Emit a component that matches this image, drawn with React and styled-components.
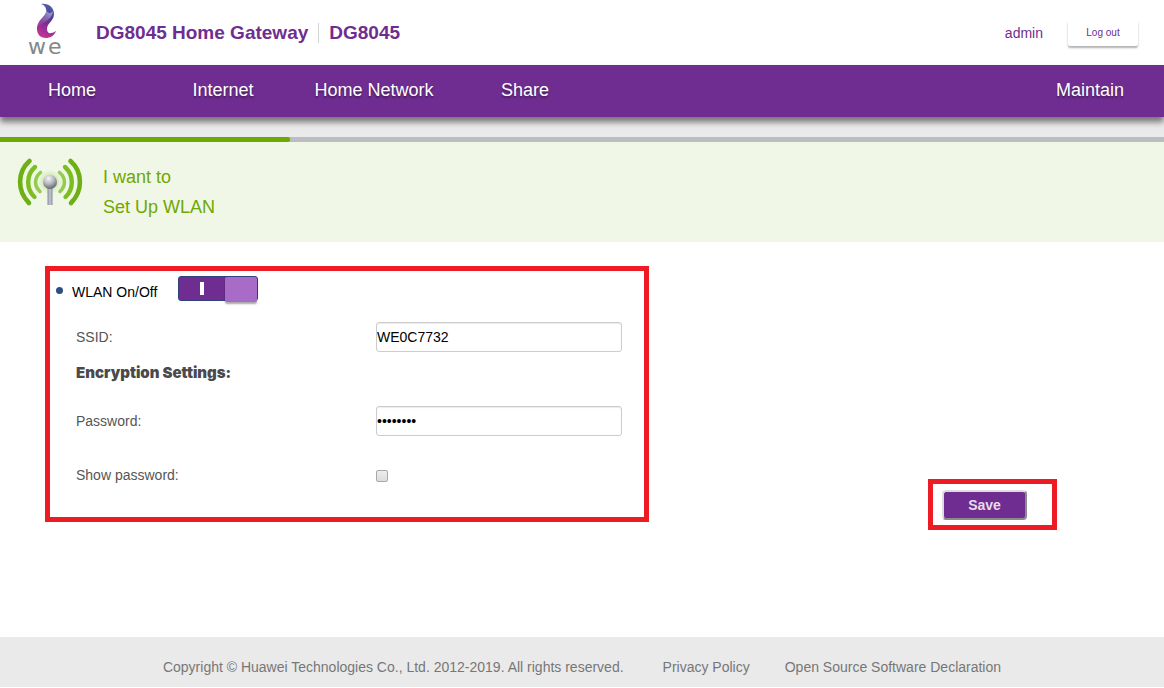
import React, { useState } from "react";
import styled, { createGlobalStyle } from "styled-components";

const GlobalStyle = createGlobalStyle`
  * { box-sizing: border-box; }
  body {
    margin: 0;
    background: #fff;
    font-family: "Liberation Sans", Arial, sans-serif;
    font-size: 14px;
    color: #555;
  }
`;

const Page = styled.div`
  display: flex;
  flex-direction: column;
  min-height: calc(100vh - 1px);
`;

const Header = styled.header`
  display: flex;
  align-items: center;
  height: 65px;
  padding: 0 26px 0 28px;
`;

const Logo = styled.svg`
  display: block;
  flex: none;
  width: 38px;
  height: 64px;
  margin-right: 30px;
`;

const Title = styled.h1`
  display: flex;
  align-items: center;
  margin: 0;
  font: 700 19px/20px "Liberation Sans", Arial, sans-serif;
  color: #702d91;
`;

const Model = styled.span`
  margin-left: 10px;
  padding-left: 10px;
  border-left: 1px solid #d4d4d4;
`;

const Account = styled.div`
  display: flex;
  align-items: center;
  gap: 25px;
  margin-left: auto;
  color: #702d91;
`;

const LogoutButton = styled.button`
  width: 70px;
  height: 26px;
  padding: 0;
  border: 0;
  border-radius: 2px;
  background: #fff;
  box-shadow: 0 2px 2px rgba(0, 0, 0, 0.3);
  font: 10px "Liberation Sans", Arial, sans-serif;
  color: #702d91;
`;

const Nav = styled.nav`
  position: relative;
  display: flex;
  gap: 7px;
  height: 52px;
  padding-right: 2px;
  background: #702d91;
  box-shadow: 0 5px 6px rgba(0, 0, 0, 0.5);
`;

const NavLink = styled.a`
  width: 144px;
  margin-left: ${(p) => (p.$end ? "auto" : "0")};
  font-size: 18px;
  line-height: 50px;
  text-align: center;
  text-decoration: none;
  white-space: nowrap;
  color: #fff;
  text-shadow: 0 2px 2px rgba(0, 0, 0, 0.4);
`;

const Progress = styled.div`
  padding-top: 20px;
  background: #eaeaea;
`;

const Track = styled.div`
  height: 5px;
  background: #babdc1;
`;

const Fill = styled.div`
  width: 290px;
  height: 5px;
  border-radius: 0 2px 2px 0;
  background: #6fa800;
`;

const Banner = styled.section`
  display: flex;
  align-items: flex-start;
  gap: 19px;
  height: 100px;
  padding: 15px 16px;
  background: #f1f7e7;
`;

const WlanIcon = styled.svg`
  flex: none;
  width: 68px;
  height: 52px;
`;

const Goal = styled.h2`
  margin: 5px 0 0;
  font-size: 18px;
  font-weight: 400;
  line-height: 30px;
  color: #6fa800;
`;

const GoalLine = styled.span`
  display: block;
`;

const Main = styled.main`
  display: flex;
  flex: 1;
  align-items: flex-start;
  justify-content: space-between;
  padding: 24px 107px 0 45px;
`;

const Settings = styled.form`
  display: flex;
  flex: 0 1 604px;
  flex-direction: column;
  min-height: 256px;
  padding: 5px 22px 0 5px;
  border: 5px solid #ed1c24;
`;

const SwitchRow = styled.div`
  display: flex;
  align-items: center;
  height: 26px;
  padding-left: 1px;
  color: #000;
`;

const Dot = styled.span`
  width: 7px;
  height: 7px;
  margin: 2px 9px 0 0;
  border-radius: 50%;
  background: #2c4f82;
`;

const SwitchLabel = styled.label`
  width: 106px;
  padding-top: 5px;
`;

const Switch = styled.input`
  appearance: none;
  width: 80px;
  height: 25px;
  margin: 0 0 1px;
  border: 1px solid #34417f;
  border-radius: 3px;
  background:
    linear-gradient(#fff, #fff) 21px 5px / 4px 13px no-repeat,
    #702d91;

  &::before {
    content: "";
    display: block;
    width: 32px;
    height: 25px;
    margin-left: auto;
    border-radius: 2px;
    background: #a96bc8;
    box-shadow: 0 2px 2px rgba(0, 0, 0, 0.35);
  }
`;

const Field = styled.div`
  display: flex;
  align-items: center;
  height: 30px;
  margin-top: ${(p) => p.$gap}px;
  padding-left: 21px;
`;

const FieldLabel = styled.label`
  width: 300px;
`;

const GroupTitle = styled.h3`
  margin: 12px 0 0;
  padding-left: 21px;
  font: 900 15px/18px Inter, sans-serif;
  color: #4a4a4a;
`;

const TextInput = styled.input`
  flex: 1;
  min-width: 0;
  height: 30px;
  padding: 0;
  border: 1px solid #ccc;
  border-radius: 3px;
  background: #fff;
  box-shadow: inset 0 1px 1px rgba(0, 0, 0, 0.08);
  font: 14px "Liberation Sans", Arial, sans-serif;
  color: #000;
`;

const CheckBox = styled.input`
  appearance: none;
  width: 12px;
  height: 12px;
  margin: 2px 0 0;
  border: 1px solid #a9a9a9;
  border-radius: 2px;
  background: linear-gradient(#ededed, #dcdcdc);

  &:checked {
    background: #702d91;
  }
`;

const SaveArea = styled.div`
  margin-top: 213px;
  padding: 6px 25px 5px 9px;
  border: 5px solid #ed1c24;
`;

const SaveButton = styled.button`
  display: block;
  width: 85px;
  height: 30px;
  padding: 0;
  border: 2px solid;
  border-color: #ddd #8b8b8b #8b8b8b #ddd;
  border-radius: 4px;
  background: #702d91;
  font: 700 14px "Liberation Sans", Arial, sans-serif;
  color: #e4dce8;
`;

const Footer = styled.footer`
  display: flex;
  align-items: center;
  justify-content: center;
  height: 50px;
  padding-top: 10px;
  background: #eaeaea;
  color: #777;
`;

const FooterLink = styled.a`
  margin-left: ${(p) => p.$gap}px;
  color: #777;
  text-decoration: none;
`;

const menu = ["Home", "Internet", "Home Network", "Share"];

function BrandLogo() {
  return (
    <Logo viewBox="0 0 38 64" role="img" aria-label="we">
      <defs>
        <linearGradient id="flame" x1="0.7" y1="0" x2="0.4" y2="1">
          <stop offset="0" stopColor="#5660ad" />
          <stop offset="0.35" stopColor="#49419a" />
          <stop offset="0.62" stopColor="#842c94" />
          <stop offset="1" stopColor="#c63494" />
        </linearGradient>
        <linearGradient id="shine" x1="0.7" y1="0" x2="0.2" y2="1">
          <stop offset="0" stopColor="#b9b9de" stopOpacity="0.8" />
          <stop offset="1" stopColor="#a867ae" stopOpacity="0.1" />
        </linearGradient>
      </defs>
      <path
        d="M13 3C20 2 26 6 26 13C26 20 19 22 19 28C19 31 21 33 23 32C25 32 26 31 28 30C26 35 22 37 18 37C12 37 9 33 9 28C9 18 20 15 18 8C17 5 16 4 13 3Z"
        fill="url(#flame)"
      />
      <path d="M18 8C20 15 9 18 9 28C14 20 24 20 25 10C23 13 19 13 18 8Z" fill="url(#shine)" />
      <text x="0 20" y="53" fontFamily="'DejaVu Sans', sans-serif" fontSize="22" fill="#85868a">
        we
      </text>
    </Logo>
  );
}

function Antenna() {
  return (
    <WlanIcon viewBox="0 0 68 52" aria-hidden="true">
      <defs>
        <radialGradient id="ball" cx="0.4" cy="0.25" r="0.75">
          <stop offset="0" stopColor="#f5f6f8" />
          <stop offset="0.55" stopColor="#b0b3ba" />
          <stop offset="1" stopColor="#61656f" />
        </radialGradient>
        <radialGradient id="glow">
          <stop offset="0.4" stopColor="#b8dd8a" stopOpacity="0.8" />
          <stop offset="1" stopColor="#d8edc0" stopOpacity="0" />
        </radialGradient>
        <linearGradient id="mast">
          <stop offset="0" stopColor="#848b99" />
          <stop offset="0.5" stopColor="#c5cad2" />
          <stop offset="1" stopColor="#858c9a" />
        </linearGradient>
      </defs>
      <circle cx="34" cy="25" r="13" fill="url(#glow)" />
      <g fill="none" strokeLinecap="round">
        <path d="M13.500 4C1 15 1 34 13 46M54.500 4C67 15 67 34 55 46" stroke="#6eaf16" strokeWidth="4.600" />
        <path d="M19 10C10 18 10 32 18.500 40M49 10C58 18 58 32 49.500 40" stroke="#7dbd24" strokeWidth="4.400" />
        <path d="M24.500 15.500C18 21 18 29 24 34.500M43.500 15.500C50 21 50 29 44 34.500" stroke="#94cc50" strokeWidth="3.600" />
      </g>
      <path d="M31.500 30h5v18h-5z" fill="url(#mast)" />
      <circle cx="34" cy="25" r="7" fill="url(#ball)" />
    </WlanIcon>
  );
}

export default function App() {
  const [ssid, setSsid] = useState("WE0C7732");
  const [password, setPassword] = useState("12345678");
  const [visible, setVisible] = useState(false);

  return (
    <>
      <GlobalStyle />
      <Page>
        <Header>
          <BrandLogo />
          <Title>
            DG8045 Home Gateway <Model>DG8045</Model>
          </Title>
          <Account>
            <span>admin</span>
            <LogoutButton type="button">Log out</LogoutButton>
          </Account>
        </Header>
        <Nav>
          {menu.map((name) => (
            <NavLink key={name} href="#">
              {name}
            </NavLink>
          ))}
          <NavLink href="#" $end>
            Maintain
          </NavLink>
        </Nav>
        <Progress>
          <Track>
            <Fill />
          </Track>
        </Progress>
        <Banner>
          <Antenna />
          <Goal>
            <GoalLine>I want to</GoalLine>
            <GoalLine>Set Up WLAN</GoalLine>
          </Goal>
        </Banner>
        <Main>
          <Settings id="wlan" onSubmit={(e) => e.preventDefault()}>
            <SwitchRow>
              <Dot />
              <SwitchLabel htmlFor="wlan-on">WLAN On/Off</SwitchLabel>
              <Switch id="wlan-on" type="checkbox" role="switch" defaultChecked />
            </SwitchRow>
            <Field $gap={20}>
              <FieldLabel htmlFor="ssid">SSID:</FieldLabel>
              <TextInput id="ssid" value={ssid} onChange={(e) => setSsid(e.target.value)} />
            </Field>
            <GroupTitle>Encryption Settings:</GroupTitle>
            <Field $gap={24}>
              <FieldLabel htmlFor="password">Password:</FieldLabel>
              <TextInput
                id="password"
                type={visible ? "text" : "password"}
                value={password}
                onChange={(e) => setPassword(e.target.value)}
              />
            </Field>
            <Field $gap={24}>
              <FieldLabel htmlFor="show">Show password:</FieldLabel>
              <CheckBox
                id="show"
                type="checkbox"
                checked={visible}
                onChange={(e) => setVisible(e.target.checked)}
              />
            </Field>
          </Settings>
          <SaveArea>
            <SaveButton type="submit" form="wlan">
              Save
            </SaveButton>
          </SaveArea>
        </Main>
        <Footer>
          <span>Copyright © Huawei Technologies Co., Ltd. 2012-2019. All rights reserved.</span>
          <FooterLink href="#" $gap={39}>
            Privacy Policy
          </FooterLink>
          <FooterLink href="#" $gap={35}>
            Open Source Software Declaration
          </FooterLink>
        </Footer>
      </Page>
    </>
  );
}
